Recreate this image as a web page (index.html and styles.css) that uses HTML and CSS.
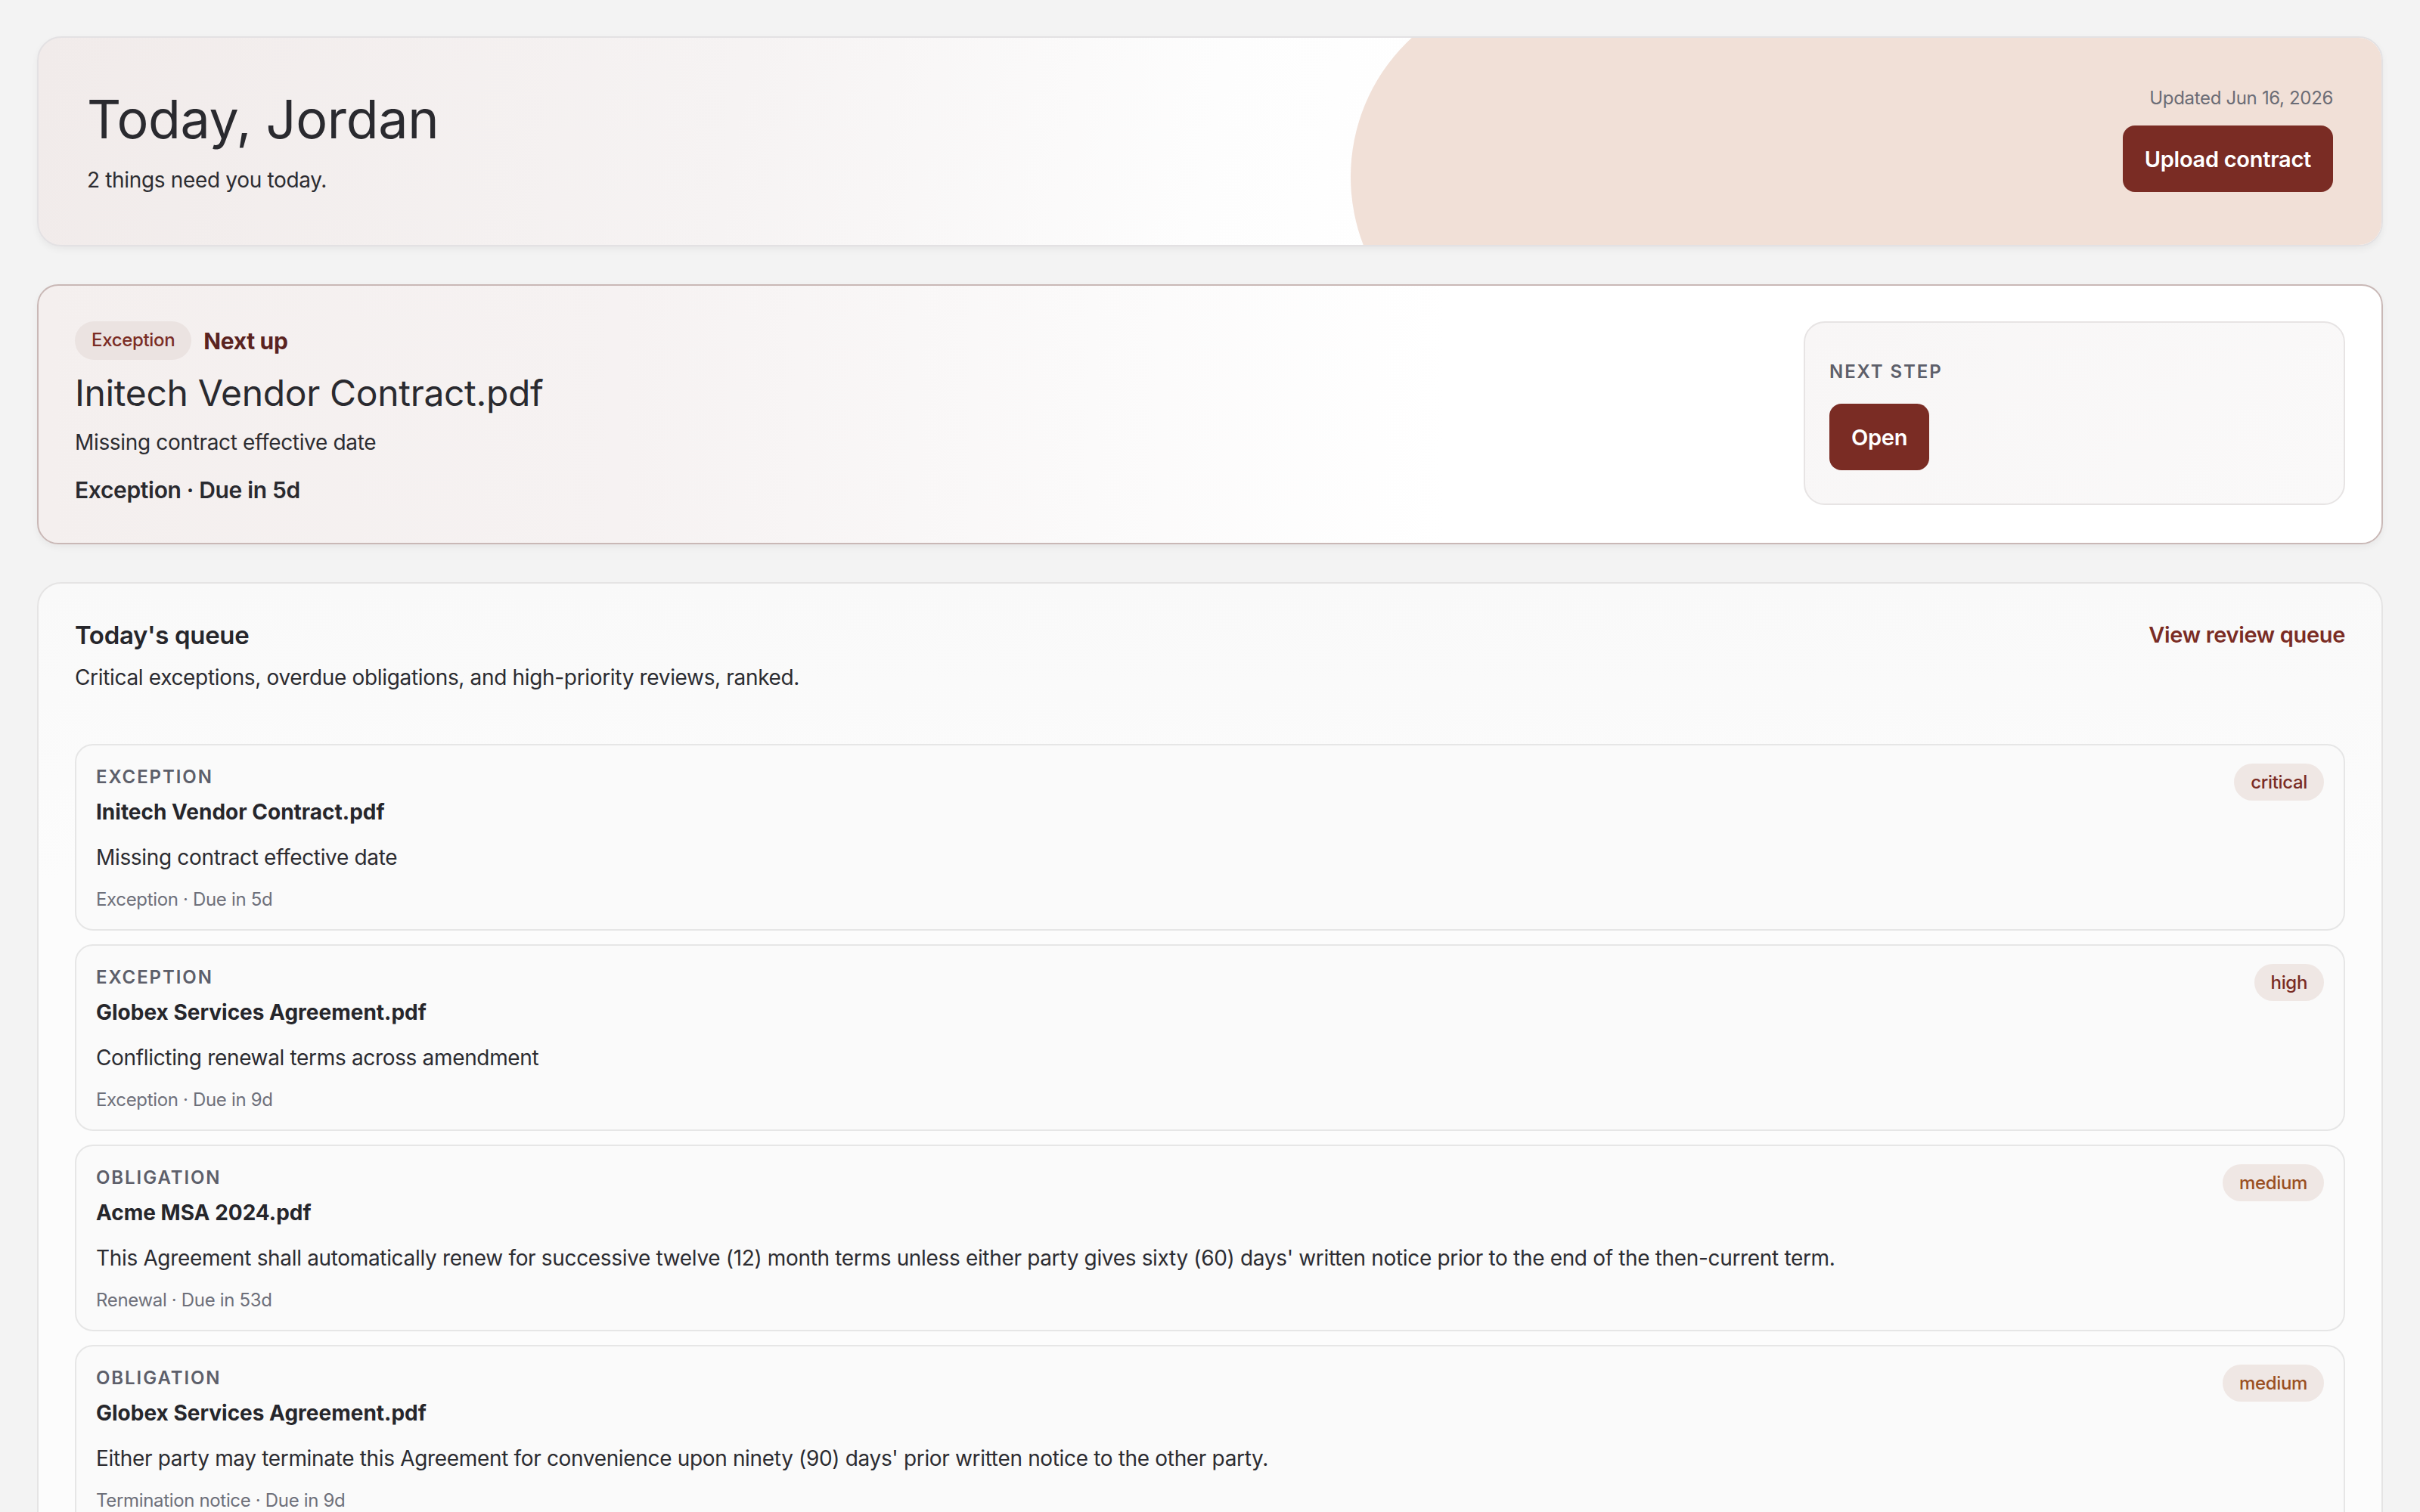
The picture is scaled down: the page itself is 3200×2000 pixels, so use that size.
FILE: index.html
```html
<!DOCTYPE html>
<html lang="en">

<head>
  <meta charset="UTF-8">
  <meta name="viewport" content="width=device-width, initial-scale=1.0">
  <title>Today</title>
  <link rel="stylesheet" href="styles.css">
</head>

<body>
  <main class="page">
    <!-- greeting -->
    <section class="hero">
      <div class="hero-text">
        <h1>Today, Jordan</h1>
        <p>2 things need you today.</p>
      </div>
      <div class="hero-side">
        <span class="updated">Updated Jun 16, 2026</span>
        <button class="btn">Upload contract</button>
      </div>
    </section>

    <!-- next up -->
    <section class="next-up">
      <div class="next-main">
        <div class="next-tags">
          <span class="tag">Exception</span>
          <span class="next-label">Next up</span>
        </div>
        <h2>Initech Vendor Contract.pdf</h2>
        <p class="next-desc">Missing contract effective date</p>
        <p class="next-meta">Exception · Due in 5d</p>
      </div>
      <div class="next-step">
        <div class="eyebrow">Next step</div>
        <button class="btn">Open</button>
      </div>
    </section>

    <!-- queue -->
    <section class="queue">
      <div class="queue-head">
        <div>
          <h3>Today's queue</h3>
          <p>Critical exceptions, overdue obligations, and high-priority reviews, ranked.</p>
        </div>
        <a class="link" href="#">View review queue</a>
      </div>

      <ul class="queue-list">
        <li class="item">
          <div class="eyebrow">Exception</div>
          <span class="pill">critical</span>
          <div class="item-title">Initech Vendor Contract.pdf</div>
          <div class="item-desc">Missing contract effective date</div>
          <div class="item-meta">Exception · Due in 5d</div>
        </li>
        <li class="item">
          <div class="eyebrow">Exception</div>
          <span class="pill">high</span>
          <div class="item-title">Globex Services Agreement.pdf</div>
          <div class="item-desc">Conflicting renewal terms across amendment</div>
          <div class="item-meta">Exception · Due in 9d</div>
        </li>
        <li class="item">
          <div class="eyebrow">Obligation</div>
          <span class="pill medium">medium</span>
          <div class="item-title">Acme MSA 2024.pdf</div>
          <div class="item-desc">This Agreement shall automatically renew for successive twelve (12) month terms unless either party gives sixty (60) days' written notice prior to the end of the then-current term.</div>
          <div class="item-meta">Renewal · Due in 53d</div>
        </li>
        <li class="item">
          <div class="eyebrow">Obligation</div>
          <span class="pill medium">medium</span>
          <div class="item-title">Globex Services Agreement.pdf</div>
          <div class="item-desc">Either party may terminate this Agreement for convenience upon ninety (90) days' prior written notice to the other party.</div>
          <div class="item-meta">Termination notice · Due in 9d</div>
        </li>
      </ul>
    </section>
  </main>
</body>

</html>
```

FILE: styles.css
```css
* {
  padding: 0;
  margin: 0;
  box-sizing: border-box;
}

body {
  background: #f3f3f3;
  font-family: Inter, "Liberation Sans", sans-serif;
  color: #2c2c31;
  font-size: 28px;
  line-height: 40px;
  letter-spacing: -0.012em;
}

.page {
  padding: 48px 49px;
  display: flex;
  flex-direction: column;
  gap: 50px;
}

.btn {
  font-family: inherit;
  font-size: 29px;
  font-weight: 600;
  letter-spacing: -0.01em;
  color: #fff;
  background: #7a2c24;
  border: 0;
  border-radius: 16px;
  height: 88px;
  padding: 0 29px;
}

.eyebrow {
  font-size: 24px;
  line-height: 32px;
  font-weight: 600;
  letter-spacing: 0.08em;
  text-transform: uppercase;
  color: #5d5f6a;
}

/* greeting card */
.hero {
  position: relative;
  overflow: hidden;
  display: flex;
  justify-content: space-between;
  align-items: center;
  height: 278px;
  padding: 2px 64px 0;
  border: 2px solid #e3e1e3;
  border-radius: 32px;
  background: linear-gradient(100deg, #f1ebea 0%, #f6f3f3 30%, #fdfdfd 50%, #fff 60%);
  box-shadow: 0 4px 10px rgba(0, 0, 0, 0.05);
}

/* peach blob on the right */
.hero::before {
  content: "";
  position: absolute;
  left: 56%;
  right: -300px;
  top: -66px;
  height: 500px;
  border-radius: 250px;
  background: #f1e0d7;
}

.hero-text,
.hero-side {
  position: relative;
}

.hero h1 {
  font-size: 70px;
  line-height: 80px;
  font-weight: 400;
  color: #2a2a2f;
}

.hero-text p {
  margin-top: 20px;
}

.hero-side {
  display: flex;
  flex-direction: column;
  align-items: flex-end;
  gap: 20px;
  margin-top: -8px;
}

.updated {
  font-size: 24px;
  line-height: 32px;
  color: #6b6c75;
}

/* next up card */
.next-up {
  display: grid;
  grid-template-columns: 1fr 716px;
  padding: 47px 48px 50px;
  border: 2px solid #c9b8b6;
  border-radius: 28px;
  background: linear-gradient(90deg, #f4efee 0%, #f6f2f2 25%, #fbfafa 45%, #fff 60%);
  box-shadow: 0 4px 10px rgba(0, 0, 0, 0.05);
}

.next-tags {
  display: flex;
  align-items: center;
  gap: 16px;
}

.tag {
  font-size: 24px;
  line-height: 34px;
  font-weight: 500;
  padding: 8px 22px 9px;
  border-radius: 999px;
  background: #ebe3e1;
  color: #7a2c24;
}

.next-label {
  font-size: 30px;
  font-weight: 700;
  color: #5a2320;
}

.next-up h2 {
  margin-top: 14px;
  font-size: 48px;
  line-height: 60px;
  font-weight: 400;
  color: #2a2a2f;
}

.next-desc {
  margin-top: 15px;
}

.next-meta {
  margin-top: 23px;
  font-size: 30px;
  font-weight: 600;
  color: #2a2a2f;
}

.next-step {
  padding: 49px 32px 32px;
  border: 2px solid #e7e4e4;
  border-radius: 28px;
  background: linear-gradient(135deg, #f8f6f6, #faf9f9);
}

.next-step .btn {
  margin-top: 26px;
}

/* queue card */
.queue {
  padding: 46px 48px 48px;
  border: 2px solid #e5e4e4;
  border-radius: 32px;
  background: linear-gradient(180deg, #f9f9f9, #fcfcfc 30%);
}

.queue-head {
  display: flex;
  justify-content: space-between;
  align-items: flex-start;
}

.queue-head h3 {
  font-size: 33px;
  line-height: 44px;
  font-weight: 600;
  color: #26262b;
}

.queue-head p {
  margin-top: 14px;
}

.link {
  font-size: 29px;
  line-height: 44px;
  font-weight: 600;
  color: #7a2c24;
  text-decoration: none;
}

.queue-list {
  list-style: none;
  margin-top: 68px;
  display: flex;
  flex-direction: column;
  gap: 18px;
}

.item {
  display: grid;
  grid-template-columns: 1fr auto;
  padding: 26px 26px 23px;
  border: 2px solid #e6e6e6;
  border-radius: 24px;
  background: #fafafa;
}

.item > * {
  grid-column: 1;
}

.item .pill {
  grid-column: 2;
  grid-row: 1 / span 4;
  align-self: start;
  margin-top: -2px;
}

.pill {
  font-size: 24px;
  line-height: 33px;
  font-weight: 500;
  padding: 8px 22px;
  border-radius: 999px;
  background: #efe7e4;
  color: #7a2c24;
}

.pill.medium {
  color: #9a5022;
}

.item-title {
  margin-top: 10px;
  font-weight: 700;
  letter-spacing: 0;
  color: #26262b;
}

.item-desc {
  margin-top: 20px;
}

.item-meta {
  margin-top: 20px;
  font-size: 24px;
  line-height: 32px;
  color: #6e707a;
}
```
